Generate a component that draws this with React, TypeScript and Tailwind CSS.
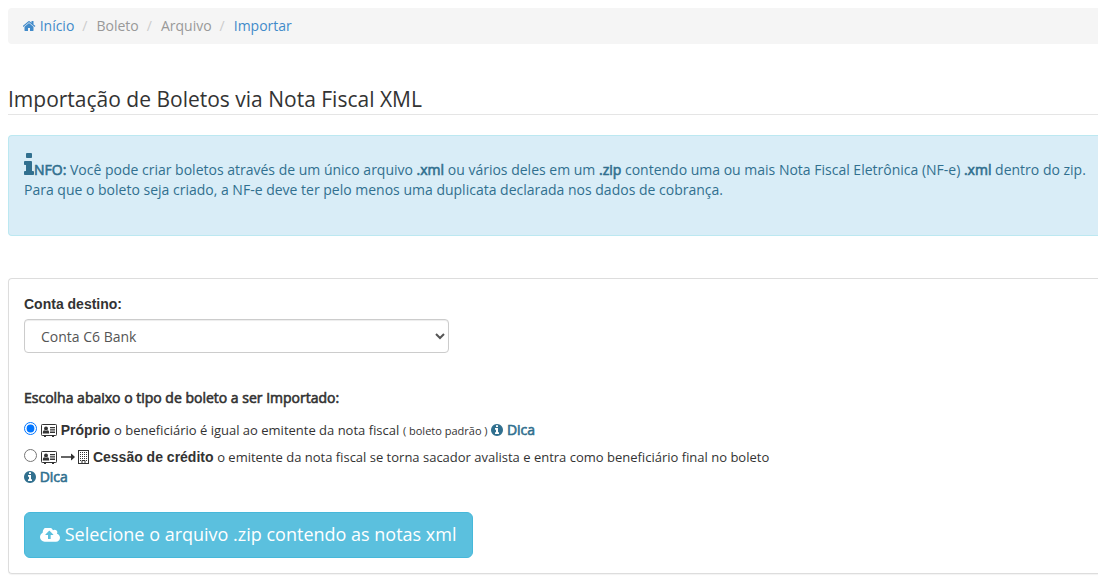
import { useState } from "react";
import type { ReactNode } from "react";

const HOME =
  "M1408 992v480q0 26-19 45t-45 19h-384v-384h-256v384h-384q-26 0-45-19t-19-45v-480q0-1 .5-3t.5-3l575-474 575 474q1 2 1 6zm223-69l-62 74q-8 9-21 11h-3q-13 0-21-7l-692-577-692 577q-12 8-24 7-13-2-21-11l-62-74q-8-10-7-23.5t11-21.5l719-599q32-26 76-26t76 26l244 204v-195q0-14 9-23t23-9h192q14 0 23 9t9 23v408l219 182q10 8 11 21.5t-7 23.5z";
const INFO =
  "M1216 1344v128q0 26-19 45t-45 19h-512q-26 0-45-19t-19-45v-128q0-26 19-45t45-19h64v-384h-64q-26 0-45-19t-19-45v-128q0-26 19-45t45-19h384q26 0 45 19t19 45v576h64q26 0 45 19t19 45zm-128-1152v192q0 26-19 45t-45 19h-256q-26 0-45-19t-19-45v-192q0-26 19-45t45-19h256q26 0 45 19t19 45z";
const INFO_CIRCLE =
  "M1152 1376v-160q0-14-9-23t-23-9h-96v-512q0-14-9-23t-23-9h-320q-14 0-23 9t-9 23v160q0 14 9 23t23 9h96v320h-96q-14 0-23 9t-9 23v160q0 14 9 23t23 9h448q14 0 23-9t9-23zm-128-896v-160q0-14-9-23t-23-9h-192q-14 0-23 9t-9 23v160q0 14 9 23t23 9h192q14 0 23-9t9-23zm640 416q0 209-103 385.5t-279.5 279.5-385.5 103-385.5-103-279.5-279.5-103-385.5 103-385.5 279.5-279.5 385.5-103 385.5 103 279.5 279.5 103 385.5z";
const CLOUD_UPLOAD =
  "M1216 864q0-14-9-23l-352-352q-9-9-23-9t-23 9l-351 351q-10 12-10 24 0 14 9 23t23 9h224v352q0 13 9.5 22.5t22.5 9.5h192q13 0 22.5-9.5t9.5-22.5v-352h224q13 0 22.5-9.5t9.5-22.5zm640 288q0 159-112.5 271.5t-271.5 112.5h-1088q-185 0-316.5-131.5t-131.5-316.5q0-130 70-240t188-165q-2-30-2-43 0-212 150-362t362-150q156 0 285.5 87t188.5 231q71-62 166-62 106 0 181 75t75 181q0 76-41 138 130 31 213.5 135.5t83.5 238.5z";

function Glyph({ d, box, className }: { d: string; box: string; className: string }) {
  return (
    <svg viewBox={box} className={className} fill="currentColor" aria-hidden="true">
      <path d={d} />
    </svg>
  );
}

function CardIcon() {
  return (
    <svg viewBox="0 0 16 13" className="inline-block h-[13px] w-4 align-[-2px]" aria-hidden="true">
      <rect x="0.5" y="0.5" width="15" height="11" rx="0.8" fill="none" stroke="currentColor" />
      <path
        d="M3 11.500h2v1.500H3zM11 11.500h2v1.500h-2zM9 3h5v1.300H9zM9 5.300h5v1.300H9zM9 7.600h5v1.300H9zM1.800 9.400c0-2 .6-3.200 1.600-3.200.9.7 2.300.7 3.200 0 1 0 1.600 1.200 1.600 3.200z"
        fill="currentColor"
      />
      <circle cx="5" cy="4.400" r="2" fill="currentColor" />
    </svg>
  );
}

const WINDOW_ROWS = [2, 4, 6, 8, 10];
const WINDOW_COLUMNS = [2, 4, 6, 8];

function BuildingIcon() {
  return (
    <svg viewBox="0 0 11 14" className="inline-block h-3.5 w-[11px] align-[-2px]" aria-hidden="true">
      <rect x="0.5" y="0.5" width="10" height="13" fill="none" stroke="currentColor" />
      {WINDOW_ROWS.map((y) =>
        WINDOW_COLUMNS.filter((x) => y < 10 || x === 2 || x === 8).map((x) => (
          <rect key={`${x}-${y}`} x={x} y={y} width="1" height="1" fill="currentColor" />
        )),
      )}
      <path d="M4 13.500v-3h3v3" fill="none" stroke="currentColor" />
    </svg>
  );
}

function ArrowIcon() {
  return (
    <svg viewBox="0 0 14 8" className="inline-block h-2 w-3.5 align-[1px]" aria-hidden="true">
      <path d="M0 3.200h10V1q0-.6.500-.2L14 4l-3.500 3.200q-.5.4-.5-.2V4.800H0z" fill="currentColor" />
    </svg>
  );
}

function Strong({ children }: { children: ReactNode }) {
  return <strong className="font-normal [-webkit-text-stroke:0.6px_currentColor]">{children}</strong>;
}

function Tip() {
  return (
    <a href="#dica" className="whitespace-nowrap text-[#31708f]">
      <Glyph d={INFO_CIRCLE} box="128 128 1536 1536" className="inline-block size-3 align-[-1px]" />{" "}
      <Strong>Dica</Strong>
    </a>
  );
}

function Crumb({ children }: { children: ReactNode }) {
  return <li className="before:pr-[9px] before:pl-2 before:text-[#cccccc] before:content-['/']">{children}</li>;
}

export default function App() {
  const [kind, setKind] = useState("proprio");

  return (
    <main className="overflow-x-hidden bg-white pt-2 pb-3 pl-2 font-['Open_Sans',sans-serif] text-sm leading-5 text-[#333333]">
      <nav aria-label="Trilha" className="rounded-l bg-[#f5f5f5] px-[15px] py-2 text-[#999999]">
        <ol className="flex">
          <li>
            <a href="#inicio" className="text-[#428bca]">
              <Glyph d={HOME} box="64 128 1664 1536" className="inline-block h-3 w-[13px] align-[-1px]" /> Início
            </a>
          </li>
          <Crumb>Boleto</Crumb>
          <Crumb>Arquivo</Crumb>
          <Crumb>
            <a href="#importar" className="text-[#428bca]">Importar</a>
          </Crumb>
        </ol>
      </nav>

      <h1 className="mt-10 border-b border-[#e5e5e5] text-[21px] leading-[30px]">
        Importação de Boletos via Nota Fiscal XML
      </h1>

      <div className="mt-5 rounded-l border border-r-0 border-[#bce8f1] bg-[#d9edf7] pt-[17px] pr-2 pb-[35px] pl-[15px] text-[#31708f]">
        <p>
          <Glyph d={INFO} box="576 128 640 1408" className="inline-block h-[22px] w-2.5 align-baseline" />
          <Strong>NFO:</Strong> Você pode criar boletos através de um único arquivo <Strong>.xml</Strong> ou vários
          deles em um <Strong>.zip</Strong> contendo uma ou mais Nota Fiscal Eletrônica (NF-e) <Strong>.xml</Strong>{" "}
          dentro do zip.
          <br />
          Para que o boleto seja criado, a NF-e deve ter pelo menos uma duplicata declarada nos dados de cobrança.
        </p>
      </div>

      <form
        className="mt-[42px] rounded-l border border-r-0 border-[#dddddd] p-[15px] shadow-[0_1px_1px_rgba(0,0,0,0.05)]"
        onSubmit={(event) => event.preventDefault()}
      >
        <label htmlFor="conta" className="block font-['Liberation_Sans',sans-serif] font-bold">
          Conta destino:
        </label>
        <select
          id="conta"
          className="mt-[5px] block h-[34px] w-full max-w-[425px] rounded border border-[#cccccc] bg-white px-3 text-[#555555] shadow-[inset_0_1px_1px_rgba(0,0,0,0.075)]"
        >
          <option>Conta C6 Bank</option>
        </select>

        <fieldset className="mt-[35px]">
          <legend>
            <Strong>Escolha abaixo o tipo de boleto a ser Importado:</Strong>
          </legend>
          <div className="mt-3">
            <input
              id="proprio"
              type="radio"
              name="tipo"
              className="mr-1 size-[13px] align-baseline"
              checked={kind === "proprio"}
              onChange={() => setKind("proprio")}
            />
            <label htmlFor="proprio">
              <CardIcon /> <b className="font-['Liberation_Sans',sans-serif]">Próprio</b>{" "}
              <span className="text-[13px]">o beneficiário é igual ao emitente da nota fiscal</span>{" "}
              <span className="text-[11px]">( boleto padrão )</span>
            </label>{" "}
            <Tip />
          </div>
          <div className="mt-1.5">
            <input
              id="cessao"
              type="radio"
              name="tipo"
              className="mr-1 size-[13px] align-baseline"
              checked={kind === "cessao"}
              onChange={() => setKind("cessao")}
            />
            <label htmlFor="cessao">
              <CardIcon /> <ArrowIcon /> <BuildingIcon />{" "}
              <b className="font-['Liberation_Sans',sans-serif]">Cessão de crédito</b>{" "}
              <span className="text-[13px]">
                o emitente da nota fiscal se torna sacador avalista e entra como beneficiário final no boleto
              </span>
            </label>
            <br />
            <Tip />
          </div>
        </fieldset>

        <button
          type="button"
          className="mt-[25px] rounded-md border border-[#46b8da] bg-[#5bc0de] pt-[9px] pr-4 pb-[11px] pl-[15px] text-lg leading-6 text-white"
        >
          <Glyph d={CLOUD_UPLOAD} box="-64 256 1920 1280" className="inline-block h-3.5 w-5 align-[-1px]" />{" "}
          Selecione o arquivo .zip contendo as notas xml
        </button>
      </form>
    </main>
  );
}
